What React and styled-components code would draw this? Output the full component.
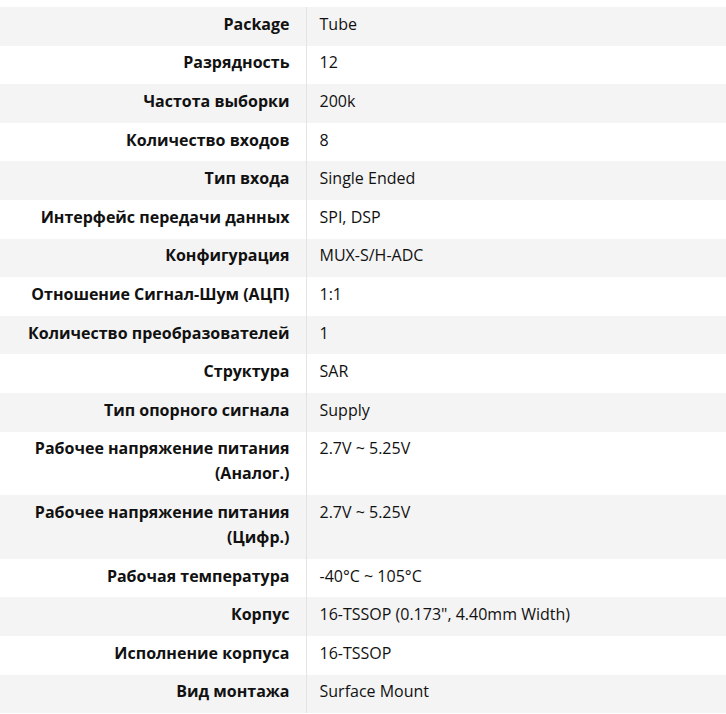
import styled, { createGlobalStyle } from "styled-components"

const specs = [
    ["Package", "Tube"],
    ["Разрядность", "12"],
    ["Частота выборки", "200k"],
    ["Количество входов", "8"],
    ["Тип входа", "Single Ended"],
    ["Интерфейс передачи данных", "SPI, DSP"],
    ["Конфигурация", "MUX-S/H-ADC"],
    ["Отношение Сигнал-Шум (АЦП)", "1:1"],
    ["Количество преобразователей", "1"],
    ["Структура", "SAR"],
    ["Тип опорного сигнала", "Supply"],
    ["Рабочее напряжение питания (Аналог.)", "2.7V ~ 5.25V"],
    ["Рабочее напряжение питания (Цифр.)", "2.7V ~ 5.25V"],
    ["Рабочая температура", "-40°C ~ 105°C"],
    ["Корпус", "16-TSSOP (0.173\", 4.40mm Width)"],
    ["Исполнение корпуса", "16-TSSOP"],
    ["Вид монтажа", "Surface Mount"],
]

const GlobalStyle = createGlobalStyle`
    body {
        margin: 0;
        background: #fff;
        font-family: "Open Sans", "Liberation Sans", sans-serif;
        color: #111;
    }
`

const App = () => {
    return (<>
        <GlobalStyle />
        <StyledSpecTable>
            <tbody>
                {specs.map(([label, value]) => (
                    <StyledRow key={label}>
                        <StyledLabel>{label}</StyledLabel>
                        <StyledValue>{value}</StyledValue>
                    </StyledRow>
                ))}
            </tbody>
        </StyledSpecTable>
    </>)
}

const StyledSpecTable = styled.table`
    width: 100%;
    margin-top: 7px;
    border-collapse: collapse;
    font-size: 16px;
    line-height: 25px;
`

const StyledRow = styled.tr`
    &:nth-child(odd) {
        background-color: #f4f4f4;
    }
`

const StyledLabel = styled.td`
    width: 306px;
    box-sizing: border-box;
    padding: 4.8px 16px 8.8px 20px;
    text-align: right;
    vertical-align: top;
    font-weight: 700;
    border-right: 1px solid #e4e4e4;
`

const StyledValue = styled.td`
    padding: 4.8px 13px 8.8px;
    vertical-align: top;
    font-weight: 400;
`

export default App
